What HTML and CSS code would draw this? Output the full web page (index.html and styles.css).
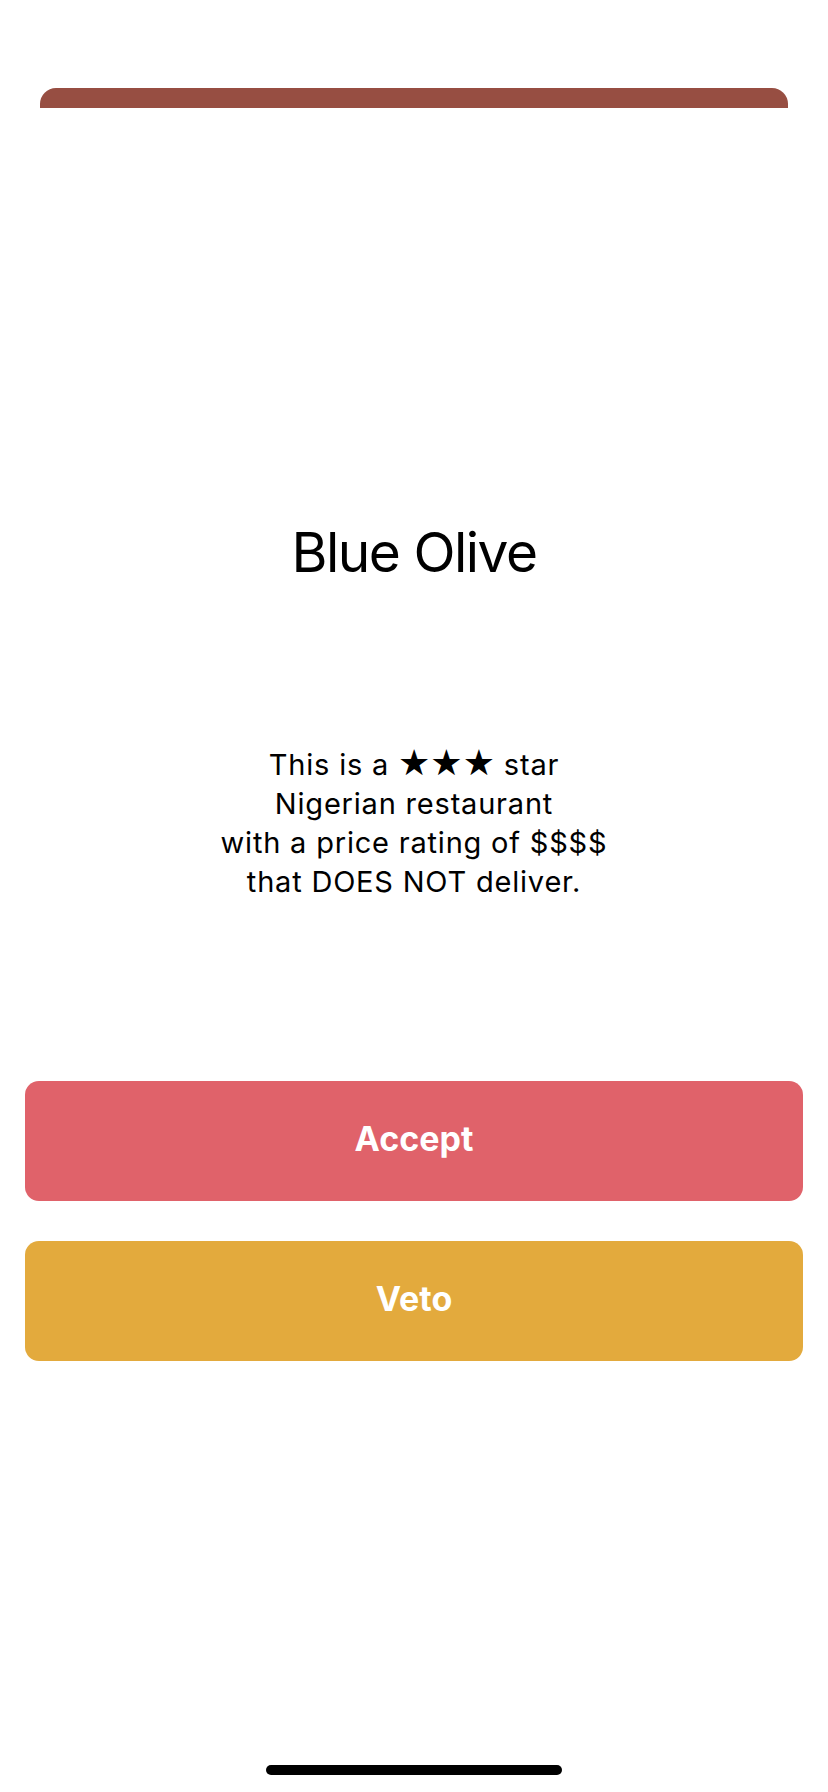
FILE: index.html
```html
<!DOCTYPE html>
<html lang="en">
<head>
<meta charset="utf-8">
<title>Blue Olive</title>
<link rel="stylesheet" href="styles.css">
</head>
<body>
<div class="screen">
  <div class="top-bar"></div>
  <h1 class="title">Blue Olive</h1>
  <p class="desc">This is a <span class="stars">★★★</span> star<br>Nigerian restaurant<br>with a price rating of $$$$<br>that DOES NOT deliver.</p>
  <div class="actions">
    <button class="btn btn-accept">Accept</button>
    <button class="btn btn-veto">Veto</button>
  </div>
  <div class="home-indicator"></div>
</div>
</body>
</html>
```

FILE: styles.css
```css
html, body {
  margin: 0;
  padding: 0;
  background: #ffffff;
}

.screen {
  position: relative;
  width: 828px;
  height: 1792px;
  display: flex;
  flex-direction: column;
  font-family: Inter, "Liberation Sans", Arial, sans-serif;
  color: #000;
  overflow: hidden;
}

.top-bar {
  margin: 88px 40px 0 40px;
  height: 20px;
  background: #974E42;
  border-radius: 16px 16px 0 0;
}

.title {
  margin: 411px 0 0 0;
  font-size: 55px;
  line-height: 66px;
  font-weight: 400;
  text-align: center;
  letter-spacing: -1.5px;
}

.desc {
  margin: 160px 0 0 0;
  font-size: 29px;
  line-height: 39px;
  text-align: center;
  letter-spacing: 0.8px;
}

.stars {
  font-family: "DejaVu Sans", sans-serif;
  font-size: 36px;
  line-height: 0;
  letter-spacing: 0;
}

.actions {
  margin: 180px 25px 0 25px;
  display: flex;
  flex-direction: column;
  gap: 40px;
}

.btn {
  height: 120px;
  border: none;
  border-radius: 14px;
  color: #fff;
  font-family: Inter, "Liberation Sans", Arial, sans-serif;
  font-weight: 700;
  font-size: 34px;
  line-height: 1;
  padding: 0 0 4px 0;
}

.btn-accept {
  background: #E0626A;
}

.btn-veto {
  background: #E3AA3D;
}

.home-indicator {
  position: absolute;
  left: 266px;
  bottom: 17px;
  width: 296px;
  height: 10px;
  border-radius: 5px;
  background: #000;
}
```
